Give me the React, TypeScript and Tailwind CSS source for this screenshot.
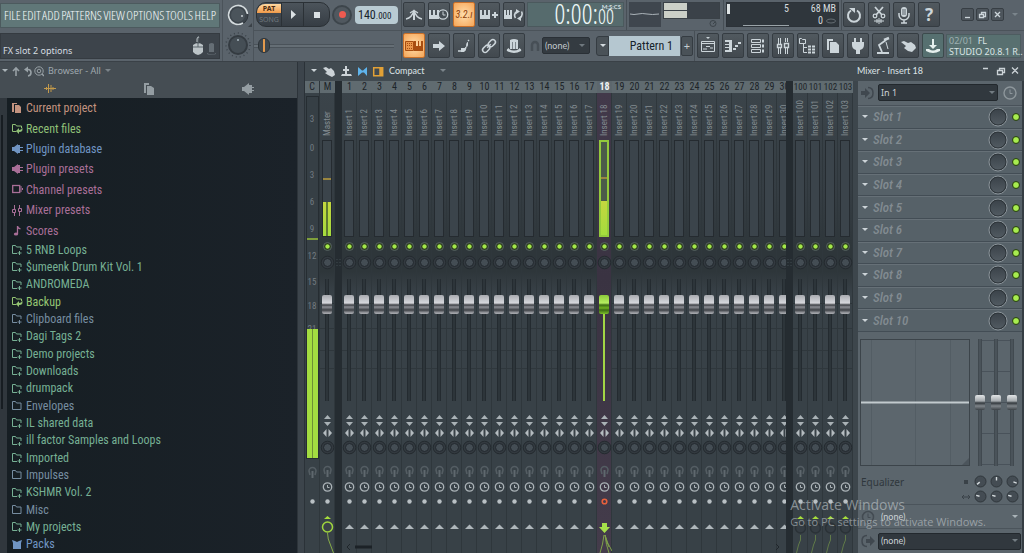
import React from "react";

const NARROW = "font-['Roboto_Condensed',Roboto,sans-serif]";
const SLIM = "font-['Open_Sans_Condensed_Light','Open_Sans_Condensed','Roboto_Condensed',sans-serif]";
const UI = "font-[Lato,'Noto_Sans',sans-serif]";
const WIDE = "font-['Noto_Sans','Open_Sans',sans-serif]";

function Svg({ w, h, children, className = "" }: { w: number; h: number; children: React.ReactNode; className?: string }) {
  return (
    <svg width={w} height={h} viewBox={`0 0 ${w} ${h}`} className={`block shrink-0 ${className}`} fill="none" stroke="none" aria-hidden="true">
      {children}
    </svg>
  );
}

const C = "#ccd5da";

const icons: Record<string, React.ReactNode> = {
  metronome: (
    <g stroke={C} fill="none">
      <path d="M2 14Q8 13 10 5Q12 13 18 14" strokeWidth="1.4" />
      <path d="M10 6v9" strokeWidth="2" />
      <path d="M6 8l3-2M14 8l-3-2" strokeWidth="1.200" />
    </g>
  ),
  waitKeys: (
    <g>
      <path d="M0 5h2v5h2V5h2v5h2V5h2v9H0z" fill={C} />
      <circle cx="14" cy="9.500" r="4.700" fill="#454d53" stroke={C} strokeWidth="1.300" />
      <path d="M14 6.500V10H16.500" stroke={C} />
    </g>
  ),
  stepKeys: <path d="M1 5h2v5h2V5h2v5h2V5h2v9H1zM13 9h2V7h2v2h2v2h-2v2h-2v-2h-2z" fill={C} />,
  loopKeys: (
    <g>
      <path d="M0 5h2v5h1V5h2v5h1V5h2v9H0z" fill={C} />
      <path d="M11.500 13q-2.500-4 1.500-6.500M17.500 6.500q2 4-2 7" stroke={C} strokeWidth="1.600" />
      <path d="M12 4l4 2.500-4 2.500zM17 16l-4-2.500 4-2.500z" fill={C} />
    </g>
  ),
  typing: (
    <g>
      <path d="M1.500 5.500h8v9h-8z" fill="#e8954a" stroke="#a84d10" />
      <path d="M3 7.500h6M3 9.500h6M3 12.500h6" stroke="#a84d10" strokeDasharray="1 1" />
      <path d="M10 5h2v5h2V5h1v5h2V5h2v10h-9z" fill="#a84d10" />
    </g>
  ),
  arrow: <path d="M4 8h6V5l6 5-6 5v-3H4z" fill={C} />,
  slide: (
    <g>
      <path d="M4 15h4q3 0 4-4" stroke={C} strokeWidth="1.500" />
      <path d="M7 12h4l1 2-2 2H7z" fill={C} />
      <path d="M12 11q0-5 2-5v3q0 2-2 2z" fill={C} />
      <path d="M14 5l1-1" stroke={C} strokeWidth="1.500" />
    </g>
  ),
  link: (
    <g stroke={C} strokeWidth="1.500" transform="rotate(-45 10 10)">
      <rect x="2" y="7.500" width="8" height="5" rx="2.500" />
      <rect x="10" y="7.500" width="8" height="5" rx="2.500" />
      <path d="M7.500 10h5" />
    </g>
  ),
  knob: (
    <g>
      <path d="M6 4q4-2 8 0v9H6z" fill={C} />
      <path d="M8.500 6v7M11.500 6v7" stroke="#7d868c" />
      <path d="M5 12q-3 1-2 3 7 4 14 0 1-2-2-3v1q-5 3-10 0z" fill={C} />
    </g>
  ),
  undo: (
    <g>
      <path d="M7 5.500a6 6 0 1 0 6 0" stroke={C} strokeWidth="2" />
      <path d="M5 3h6v5z" fill={C} />
    </g>
  ),
  cut: (
    <g stroke={C} strokeWidth="1.300">
      <path d="M6 2l7 8M14 2l-7 8" strokeWidth="1.800" />
      <circle cx="6" cy="11" r="1.800" />
      <circle cx="14" cy="11" r="1.800" />
      <path d="M5 16h10M8 14v4M10 13v6M12 14v4" strokeWidth="1" />
    </g>
  ),
  mic: (
    <g>
      <rect x="7" y="2" width="6" height="10" rx="3" fill={C} />
      <path d="M8 5h4M8 7h4M8 9h4" stroke="#59626a" />
      <path d="M5 8v2a5 5 0 0 0 10 0V8M10 15v3M7 18h6" stroke={C} strokeWidth="1.500" />
    </g>
  ),
  playlist: (
    <g>
      <path d="M8 1h4l-2 2z" fill={C} />
      <path d="M3.500 5.500h13v10h-13zM3.500 7.500h13" stroke={C} />
      <path d="M5 13h4M8 10.500h4M12 12h3" stroke={C} />
    </g>
  ),
  piano: (
    <g fill={C}>
      <path d="M2 4h7v12H2v-2h4v-2H2v-1h4V9H2V8h4V6H2z" />
      <path d="M10 12h3v2h-3zM12 9h3v2h-3zM15 6h3v2h-3z" />
    </g>
  ),
  rack: (
    <g stroke={C}>
      <path d="M3.500 3.500h9v3h-9zM3.500 8.500h9v3h-9zM3.500 13.500h9v3h-9z" />
      <path d="M14 5h2M14 10h2M14 15h2" strokeWidth="3" />
    </g>
  ),
  mixer: (
    <g stroke={C}>
      <path d="M5.500 2v6M7.500 2v6M5.500 12v6M7.500 12v6M12.500 2v4M14.500 2v4M12.500 11v7M14.500 11v7" />
      <path d="M4.500 8.500h4v3h-4zM11.500 7.500h4v4h-4z" strokeWidth="1.400" />
    </g>
  ),
  browser: (
    <g stroke={C}>
      <path d="M1.500 7.500v-5h2l1 1h3v4z" />
      <path d="M5.500 8v8.500H9M5.500 11.500H9" />
      <path d="M10 10.500h3M14 10.500h3M10 13.500h3M14 13.500h3M10 16.500h3M14 16.500h3" strokeWidth="2" />
    </g>
  ),
  copy: <path d="M4 3h6v2H6v9H4zM7 6h6l3 3v8H7z" fill={C} />,
  plug: <path d="M6 2h2v4h4V2h2v4h2v3q0 4-4 5v4H8v-4q-4-1-4-5V6h2z" fill={C} />,
  tempo: (
    <g stroke={C} fill="none">
      <path d="M13 4L6 9l3 7" strokeWidth="1.800" />
      <path d="M11 4l5-2" strokeWidth="2.500" />
      <path d="M13 6l2 7" />
      <path d="M4 17h12" strokeWidth="2" />
    </g>
  ),
  hand: <path d="M3 6l3-1 4 2 3-1 4 3 1 3-4 4-4-1-4-3 2-2z" fill={C} />,
  save: <path d="M9 3h2v6h3l-4 4-4-4h3zM3 13h3q4 3 8 0h3v2q-7 4-14 0z" fill="#e6f0ee" />,
};

function IconBtn({ icon, label, hot = false, teal = false }: { icon?: string; label: string; hot?: boolean; teal?: boolean }) {
  const tone = hot
    ? "border-[#c8702a] bg-[radial-gradient(#ffdfae,#f6a556)]"
    : teal
      ? "border-[#3c4a4c] bg-[#567070]"
      : "border-[#353c42] bg-linear-to-b from-[#51595f] to-[#42494f]";
  return (
    <button aria-label={label} className={`flex h-[25px] w-[22px] shrink-0 items-center justify-center rounded-[2px] border ${tone}`}>
      {icon ? (
        <Svg w={20} h={20}>{icons[icon]}</Svg>
      ) : (
        <span className={hot ? `text-[10px] whitespace-nowrap text-[#8c3e0a] italic ${NARROW}` : `text-[17px] font-bold text-[#ccd5da] ${WIDE}`}>{label}</span>
      )}
    </button>
  );
}

const Sep = () => <div className="h-full w-px shrink-0 bg-[#474f56]" />;

function Caret({ color = "#aab3b8" }: { color?: string }) {
  return (
    <Svg w={6} h={4}>
      <path d="M0 0h6L3 3z" fill={color} />
    </Svg>
  );
}

function Toolbar() {
  return (
    <header className="flex h-[62px] shrink-0 border-b border-[#3a4147] bg-[#5a636b]">
      <div className="flex w-[220px] shrink-0 flex-col">
        <nav className={`mt-[3px] flex h-[25px] items-center justify-between border border-[#4c5a5e] bg-[#607778] px-[3px] text-[13px] text-[#f4fafb] ${SLIM}`}>
          {["FILE", "EDIT", "ADD", "PATTERNS", "VIEW", "OPTIONS", "TOOLS", "HELP"].map((m) => (
            <button key={m}>{m}</button>
          ))}
        </nav>
        <div className="mt-[5px] flex h-[26px] items-end border border-[#353b41] bg-[#3d444b] pr-[2px] pl-[2px]">
          <span className={`flex-1 text-[9px] leading-[14px] text-[#d5dce0] ${WIDE}`}>FX slot 2 options</span>
          <Svg w={24} h={22}>
            <path d="M0 9q5-4 10 0v7q-5 6-10 0z" fill="#bcc4c8" />
            <path d="M5 8V4q2-3 0-4M0 11h10M5 7v4" stroke="#5d666c" />
            <path d="M4 6V3q0-2 2-2" stroke="#bcc4c8" />
            <path d="M16 8q3-2 5 0v8h-5z" fill="#656e75" />
            <path d="M14 17q5 3 9 0v1q-5 2-9 0z" fill="#656e75" />
          </Svg>
        </div>
      </div>
      <div className="ml-[2px] flex w-[32px] shrink-0 flex-col items-center border-x border-[#4b535a]">
        <Svg w={28} h={30}>
          <circle cx="14" cy="15" r="10" fill="#3c444b" stroke="#2f363c" strokeWidth="1" />
          <path d="M19 23A9.500 9.500 0 1 1 23.500 14" stroke="#d3dadd" strokeWidth="1.600" />
          <circle cx="14" cy="15" r="7" fill="#4b545b" />
          <circle cx="18" cy="16" r="1" fill="#c7ced2" />
          <path d="M24 27h4v-4z" fill="#3a4147" />
        </Svg>
        <Svg w={28} h={31}>
          <circle cx="14" cy="15" r="12" stroke="#3c444b" strokeWidth="1.500" strokeDasharray="1 3" />
          <circle cx="14" cy="15" r="10" fill="#343b41" />
          <circle cx="14" cy="15" r="8" fill="#454e55" />
          <circle cx="14" cy="10" r="1" fill="#a9b7bf" />
        </Svg>
      </div>
      <div className="flex min-w-0 flex-1 flex-col">
        <div className="flex h-[31px] items-center border-b border-[#4b535a]">
          <div className="flex h-full w-[147px] shrink-0 items-center pl-[2px]">
            <div className={`flex h-[25px] w-[74px] shrink-0 overflow-hidden rounded-[10px] border border-[#2b3136] bg-linear-to-b from-[#4c545b] to-[#363d44] ${WIDE}`}>
              <button className="flex w-[24px] shrink-0 flex-col text-center text-[7px] leading-[9px]">
                <span className="mt-px w-full rounded-tl-[8px] bg-linear-to-b from-[#ffd9a0] to-[#f09a48] font-bold text-[#4a2a10]">PAT</span>
                <span className="w-full pt-[2px] text-[#6f787e]">SONG</span>
              </button>
              <button aria-label="Play" className="flex w-[23px] shrink-0 items-center justify-center border-x border-[#2b3136]">
                <Svg w={6} h={9}><path d="M1 0v9l5-4.500z" fill="#dbe1e4" /></Svg>
              </button>
              <button aria-label="Stop" className="flex flex-1 items-center justify-center">
                <span className="size-[6px] bg-[#dbe1e4]" />
              </button>
            </div>
            <button aria-label="Record" className="ml-[2px] flex size-[20px] shrink-0 items-center justify-center rounded-full border-2 border-[#3d454b] bg-[#50585f]">
              <span className="size-[7px] rounded-full bg-[#ef5a50]" />
            </button>
            <div className={`ml-[3px] flex h-[18px] w-[43px] items-baseline rounded-[4px] bg-[#b9cbd3] pl-[3px] text-[#16232b] ${NARROW}`}>
              <span className="text-[12px] leading-[18px]">140</span>
              <span className="text-[9px]">.000</span>
            </div>
          </div>
          <Sep />
          <div className="ml-px flex gap-[3px]">
            <IconBtn icon="metronome" label="Metronome" />
            <IconBtn icon="waitKeys" label="Wait for input" />
            <IconBtn label="3.2.ı" hot />
            <IconBtn icon="stepKeys" label="Step edit" />
            <IconBtn icon="loopKeys" label="Loop record" />
          </div>
          <div className="relative ml-[2px] flex h-[25px] w-[97px] shrink-0 items-center justify-end border border-[#4b595d] bg-[#566b6d] pr-[9px]">
            <span className={`text-[27px] leading-[23px] text-[#eef8f8] ${SLIM}`}>0:00:<span className="text-[20px]">00</span></span>
            <span className={`absolute top-0 right-[2px] text-[6px] leading-[7px] font-bold text-[#d3dfe0] ${UI}`}>M:S:CS</span>
          </div>
          <div className="ml-[2px] h-full"><Sep /></div>
          <div className="ml-[2px] flex h-[25px] w-[32px] shrink-0 items-center bg-[#3f464e]">
            <Svg w={32} h={9}><path d="M1 4q4 1 8 0t9 0 12 0" stroke="#aab2b8" /></Svg>
          </div>
          <div className="ml-[2px] flex h-[25px] w-[57px] shrink-0 flex-col">
            <div className="flex h-[17px] shrink-0 flex-col gap-px border border-[#3a4147] bg-[#3b4249]">
              <span className="h-[7px] w-[23px] bg-[#ccd0c8]" />
              <span className="h-[7px] w-[23px] bg-[#ccd0c8]" />
            </div>
            <Svg w={57} h={8}><circle cx="50" cy="4.500" r="3" stroke="#3c444a" /><path d="M50 5l2-2" stroke="#3c444a" /></Svg>
          </div>
          <div className="ml-[3px] h-full"><Sep /></div>
          <div className={`ml-[2px] flex h-[25px] w-[113px] shrink-0 border border-[#2c3238] bg-[#2f363c] text-[10px] leading-[12px] text-[#d6dcdf] ${NARROW}`}>
            <div className="flex h-full w-[62px] justify-between bg-[linear-gradient(90deg,transparent_25%,#9aa3a8_25%)] bg-[length:100%_1px] bg-bottom bg-no-repeat">
              <span className="mt-px h-[10px] w-[3px] bg-[#dfe4e5]" />
              <span>5</span>
            </div>
            <div className="flex flex-1 flex-col items-end pr-[2px]">
              <span>68 MB</span>
              <span className="flex items-center gap-[3px]">0 <Svg w={10} h={6}><ellipse cx="5" cy="3" rx="4.500" ry="2" stroke="#656d73" /></Svg></span>
            </div>
          </div>
          <div className="ml-[2px] h-full"><Sep /></div>
          <div className="ml-px flex gap-[3px]">
            <IconBtn icon="undo" label="Undo" />
            <IconBtn icon="cut" label="Cut" />
            <IconBtn icon="mic" label="Record audio" />
            <IconBtn label="?" />
          </div>
          <div className="mr-[6px] ml-auto flex items-center gap-[2px]">
            {[
              ["Minimize", "M3 8.500h5"],
              ["Restore", "M2.500 5.500h4v3h-4zM4.500 5V3.500h4v4H7"],
              ["Close", "M3 3l5 5M8 3l-5 5"],
            ].map(([n, d]) => (
              <button key={n} aria-label={n} className="size-[13px] rounded-[2px] border border-[#373e44] bg-[#4d555c]">
                <Svg w={11} h={11}><path d={d} stroke={C} strokeWidth="1.300" /></Svg>
              </button>
            ))}
            <span className="ml-[6px]"><Caret color="#7b858c" /></span>
          </div>
        </div>
        <div className="flex h-[31px] items-center">
          <div className="flex h-full w-[147px] shrink-0 items-center">
            <input
              type="range"
              aria-label="Song position"
              defaultValue={0}
              className="h-[16px] w-[140px] appearance-none bg-transparent [&::-webkit-slider-runnable-track]:h-[4px] [&::-webkit-slider-runnable-track]:border-y [&::-webkit-slider-runnable-track]:border-[#4a5259] [&::-webkit-slider-runnable-track]:bg-[#656e75] [&::-webkit-slider-thumb]:-mt-[7px] [&::-webkit-slider-thumb]:ml-[4px] [&::-webkit-slider-thumb]:h-[15px] [&::-webkit-slider-thumb]:w-[12px] [&::-webkit-slider-thumb]:appearance-none [&::-webkit-slider-thumb]:rounded-[6px] [&::-webkit-slider-thumb]:border [&::-webkit-slider-thumb]:border-[#2d3439] [&::-webkit-slider-thumb]:bg-[linear-gradient(90deg,#3f474d_40%,#e39a4e_40%,#e39a4e_60%,#3f474d_60%)]"
            />
          </div>
          <Sep />
          <div className="ml-px flex gap-[3px]">
            <IconBtn icon="typing" label="Typing keyboard" hot />
            <IconBtn icon="arrow" label="Scroll" />
            <IconBtn icon="slide" label="Slide" />
            <IconBtn icon="link" label="Link" />
            <IconBtn icon="knob" label="Multilink" />
          </div>
          <Svg w={10} h={12} className="ml-[5px]"><path d="M2 11V5a3 3 0 0 1 6 0v6" stroke="#474f56" strokeWidth="2.500" /></Svg>
          <label className="ml-[2px] flex">
            <span className="sr-only">Snap</span>
            <select className={`h-[17px] w-[48px] appearance-none rounded-[2px] border border-[#2a3036] bg-[#343b41] pl-[2px] text-[9px] text-[#c2cace] ${UI}`}>
              <option>(none)</option>
            </select>
          </label>
          <div className="mr-[11px] -ml-[11px] h-[3px] w-[6px]"><Caret color="#6f787e" /></div>
          <button aria-label="Pattern menu" className="flex h-[20px] w-[13px] shrink-0 items-center justify-center rounded-l-[3px] border border-[#353c42] bg-[#4a5258]"><Caret color="#d4dbdf" /></button>
          <div className={`flex h-[20px] w-[71px] shrink-0 items-center justify-end bg-[#b5c7d0] pr-[7px] text-[12px] text-[#16232b] ${NARROW}`}>Pattern 1</div>
          <button className="ml-px flex h-[20px] w-[12px] shrink-0 items-center justify-center rounded-[2px] border border-[#353c42] bg-[#4a5258] text-[11px] text-[#c6ced2]">+</button>
          <div className="mx-px h-full"><Sep /></div>
          <div className="ml-px flex gap-[3px]">
            {["playlist", "piano", "rack", "mixer", "browser", "copy", "plug", "tempo", "hand"].map((n) => (
              <IconBtn key={n} icon={n} label={n} />
            ))}
            <IconBtn icon="save" label="save" teal />
          </div>
          <div className={`mr-[3px] ml-[2px] min-w-0 flex-1 border border-[#4d5c60] bg-[#587070] px-[2px] text-[9px] leading-[11px] text-[#dbe5e6] ${WIDE}`}>
            <div><span className="text-[#9fb0b2]">02/01</span>&nbsp; FL</div>
            <div className="whitespace-nowrap">STUDIO 20.8.1 R..</div>
          </div>
        </div>
      </div>
    </header>
  );
}

type Kind = "doc" | "recent" | "plug" | "channel" | "mixer" | "note" | "plus" | "folder" | "pack";

function ItemIcon({ kind, color }: { kind: Kind; color: string }) {
  const map: Record<Kind, React.ReactNode> = {
    doc: <path d="M0 1h5v1H2v8H0zM3 3h4l2 2v6H3z" fill={color} />,
    recent: (
      <g>
        <path d="M.5 9.500v-7h3l1 1.500h5v2M.5 9.500h4" stroke={color} />
        <path d="M4 9l3-3v2q3 0 3-3 2 5-3 5v2z" fill={color} />
      </g>
    ),
    plug: <path d="M0 4h2l4-3v10L2 8H0zM6 2h2v2h3v1H8v2h3v1H8v2H6z" fill={color} />,
    channel: (
      <g>
        <rect x=".7" y="2.500" width="7" height="7" stroke={color} strokeWidth="1.300" />
        <path d="M9 3v6M10.500 5v2" stroke={color} />
      </g>
    ),
    mixer: <path d="M2.500 1v4M2.500 8v4M7.500 1v3M7.500 7v5M.5 5.500h3v3h-3zM6.500 4.500h3v3h-3z" stroke={color} />,
    note: (
      <g>
        <path d="M5.500 10V2q0 2 3 3" stroke={color} strokeWidth="1.300" />
        <ellipse cx="4" cy="10" rx="2.200" ry="1.600" fill={color} />
      </g>
    ),
    plus: <path d="M.5 10.500v-8h3l1 1.500h4.500v3M.5 10.500h4.500M7.500 8v4M5.500 10h4" stroke={color} />,
    folder: <path d="M.5 10.500v-8h3l1 1.500h4.500v6.500z" stroke={color} />,
    pack: <path d="M0 2l3 1 2 1 2-1 3-1-1 3v6H1V5z" fill={color} />,
  };
  return <Svg w={12} h={13}>{map[kind]}</Svg>;
}

const G = "#76b094";
const B = "#768da0";
const P = "#a96f98";

const topItems: [Kind, string, string][] = [
  ["doc", "Current project", "#c3937f"],
  ["recent", "Recent files", "#8fc077"],
  ["plug", "Plugin database", "#7095c3"],
  ["plug", "Plugin presets", P],
  ["channel", "Channel presets", P],
  ["mixer", "Mixer presets", P],
  ["note", "Scores", P],
];

const folders: [Kind, string, string][] = [
  ["plus", "5 RNB Loops", G],
  ["plus", "$umeenk Drum Kit Vol. 1", G],
  ["plus", "ANDROMEDA", G],
  ["recent", "Backup", "#95c573"],
  ["plus", "Clipboard files", B],
  ["plus", "Dagi Tags 2", G],
  ["plus", "Demo projects", G],
  ["plus", "Downloads", G],
  ["plus", "drumpack", G],
  ["folder", "Envelopes", B],
  ["plus", "IL shared data", G],
  ["plus", "ill factor Samples and Loops", G],
  ["plus", "Imported", G],
  ["folder", "Impulses", B],
  ["plus", "KSHMR Vol. 2", G],
  ["folder", "Misc", B],
  ["plus", "My projects", G],
  ["pack", "Packs", "#7095c3"],
];

function Row({ item }: { item: [Kind, string, string] }) {
  return (
    <li className="flex-1">
      <button className="flex h-full w-full items-center gap-[2px] text-left" style={{ color: item[2] }}>
        <ItemIcon kind={item[0]} color={item[2]} />
        <span className="leading-[16px]">{item[1]}</span>
      </button>
    </li>
  );
}

function Browser() {
  return (
    <aside className="flex w-[298px] shrink-0 flex-col border-r border-[#2d343a]">
      <div className="h-[36px] shrink-0 bg-[#454d53] pt-[2px]">
        <div className={`flex h-[14px] items-center gap-[4px] pl-[2px] text-[9px] text-[#9fa8ae] ${WIDE}`}>
          <Caret />
          <Svg w={33} h={11} className="-ml-px">
            <path d="M5 10V2M2 5l3-3 3 3" stroke="#98a1a6" strokeWidth="1.600" />
            <path d="M15 3.500h2q3 0 3 3t-3 3.500" stroke="#98a1a6" strokeWidth="1.600" />
            <path d="M13 3.500l4-3v6z" fill="#98a1a6" />
            <circle cx="28" cy="5" r="4.200" stroke="#98a1a6" />
            <circle cx="28" cy="5" r="1.800" stroke="#98a1a6" />
            <path d="M31 8l2 2" stroke="#98a1a6" strokeWidth="1.500" />
          </Svg>
          <span>Browser - All</span>
          <Caret color="#7b848a" />
        </div>
        <div className="mt-px flex h-[19px] items-center justify-around">
          <button aria-label="Sounds"><Svg w={12} h={11}><path d="M0 5.500h12M2.500 4v3M4.500 1v9M7 2v7M9 4v3" stroke="#c39a4b" /></Svg></button>
          <button aria-label="Files"><Svg w={12} h={12}><path d="M1 0h5v2H3v8H1zM4 3h4l3 2v7H4z" fill="#949da2" /></Svg></button>
          <button aria-label="Plugins"><Svg w={12} h={12}><path d="M0 4h2l5-4v12L2 8H0zM7 2h3v2h2v1h-2v2h2v1h-2v2H7z" fill="#949da2" /></Svg></button>
        </div>
      </div>
      <div className="flex min-h-0 flex-1 bg-[#30373d]">
        <div className="w-[7px] shrink-0 pt-[17px]">
          <div className="ml-px h-[294px] w-[2px] bg-[#171d22]" />
        </div>
        <div className={`flex flex-1 flex-col bg-linear-to-r from-[#161e23] to-[#1b2229] pl-[5px] text-[12px] ${NARROW}`}>
          <ul className="flex h-[143px] shrink-0 flex-col">
            {topItems.map((i) => <Row key={i[1]} item={i} />)}
          </ul>
          <ul className="flex flex-1 flex-col">
            {folders.map((i) => <Row key={i[1]} item={i} />)}
          </ul>
        </div>
      </div>
    </aside>
  );
}

type Strip = { id: string; name: string; selected?: boolean; level?: boolean; output: "send" | "master" | "bus" | "active" };

function OutputIcon({ output }: { output: Strip["output"] }) {
  if (output === "master")
    return (
      <Svg w={15} h={44}>
        <path d="M4 10l3.500-3 3.500 3z" fill="#a6dd3c" />
        <circle cx="7.500" cy="18" r="5" fill="#3b4248" stroke="#a0d63e" strokeWidth="1.500" />
        <path d="M7.500 24q0 6 3 12l3 8" stroke="#86ab48" />
      </Svg>
    );
  if (output === "bus")
    return (
      <Svg w={15} h={44}>
        <path d="M4 10l3.500-3 3.500 3z" fill="#a6dd3c" />
        <circle cx="7.500" cy="19" r="5" fill="#353d43" stroke="#2b3237" strokeWidth="1.500" />
        <path d="M7.500 26q1 5-2 10l-2 8" stroke="#607a48" />
      </Svg>
    );
  if (output === "active")
    return (
      <Svg w={15} h={44}>
        <path d="M5 14h5v4h3l-5.500 6L2 18h3z" fill="#a6e04a" />
        <path d="M7 26q-1 9-4 18M8 26q1 10 4 18M8 26q2 8 7 16M8 26q1 6 4 12" stroke="#7fa24a" />
      </Svg>
    );
  return (
    <Svg w={15} h={44}>
      <path d="M3 20l4.500-4.500 4.500 4.500z" fill="#aeb6ba" />
    </Svg>
  );
}

function RouteIcon() {
  return (
    <>
      <path d="M5 19l-1-4a3.500 3.500 0 0 1 7 0l-1 4" stroke="#545d63" strokeWidth="1.600" />
      <path d="M6.500 15h2v7h-2z" fill="#5f686e" />
    </>
  );
}

function Knob() {
  return (
    <Svg w={15} h={15}>
      <circle cx="7.500" cy="7.500" r="6.300" fill="#333a40" stroke="#242a2f" />
      <circle cx="7.500" cy="7.500" r="4" fill="#444d54" stroke="#22282d" />
    </Svg>
  );
}

function Channel({ s }: { s: Strip }) {
  const tint = s.selected
    ? "bg-linear-to-b from-[#42394a] via-[#3a3342] via-[40%] to-[#443c4b]"
    : "bg-[linear-gradient(180deg,#3b444a_0px,#353d43_100px,#2e363a_155px,#2e363a_178px,#384147_200px,#384147_210px,#2d353a_210px,#2d353a_211px,#384147_211px,#384147_235px,#2f373c_235px,#2f373c_236px,#384147_236px,#384147_257px,#2f373c_257px,#2f373c_258px,#384147_258px,#384147_275px,#2f373c_275px,#2f373c_276px,#384147_276px)]";
  return (
    <div className="flex w-[15px] shrink-0 flex-col items-center">
      <div className={`flex h-[12px] w-full justify-center leading-[12px] whitespace-nowrap ${s.id.length > 2 ? "text-[9px]" : "text-[10px]"} ${s.selected ? "bg-[#5d676d] font-bold text-[#eef2f4]" : "bg-[#606b70] text-[#1d2429]"}`}>{s.id}</div>
      <div className={`flex w-full flex-1 flex-col items-center border-r border-[#2f373c] ${tint}`}>
        <div className="flex h-[47px] w-full shrink-0 items-center justify-center pb-[4px]">
          <span className="h-full rotate-180 text-[9px] leading-[12px] whitespace-nowrap text-[#838c91] [writing-mode:vertical-rl]">{s.name}</span>
        </div>
        <div className={`flex h-[97px] w-[10px] shrink-0 flex-col justify-end ${s.selected ? "border-2 border-[#93c93c] bg-[#4b5b49]" : "border border-[#252b30] bg-[#3b444b]"}`}>
          {s.level && (
            <>
              <div className="mb-[22px] h-[2px] w-full shrink-0 bg-[#9a8640]" />
              <div className="h-[34px] w-full shrink-0 bg-[linear-gradient(90deg,transparent_43%,#5f7a30_43%,#5f7a30_57%,transparent_57%),linear-gradient(#c5d63f,#a4dc3d)]" />
            </>
          )}
        </div>
        <label className="flex h-[18px] w-full shrink-0 items-center justify-center">
          <input type="checkbox" defaultChecked aria-label={`${s.name} on`} className="size-[9px] appearance-none rounded-full border border-[#566361] bg-[#2b3232] checked:bg-[radial-gradient(#a4e84a_35%,#2f401f_50%)]" />
        </label>
        <div className="h-[24px] shrink-0"><Knob /></div>
        <input
          type="range"
          defaultValue={84}
          aria-label={`${s.name} level`}
          className={`h-[122px] w-[12px] shrink-0 appearance-none bg-transparent [direction:rtl] [writing-mode:vertical-lr] [&::-webkit-slider-runnable-track]:w-[12px] ${s.selected ? "[&::-webkit-slider-runnable-track]:bg-[linear-gradient(#a2d645,#a2d645)] [&::-webkit-slider-runnable-track]:bg-[length:2px_90px] [&::-webkit-slider-runnable-track]:bg-bottom [&::-webkit-slider-runnable-track]:bg-no-repeat" : "[&::-webkit-slider-runnable-track]:bg-[linear-gradient(90deg,transparent_4px,#242b30_4px,#242b30_5px,#2d353a_5px,#2d353a_7px,#242b30_7px,#242b30_8px,transparent_8px)]"} [&::-webkit-slider-thumb]:ml-px [&::-webkit-slider-thumb]:h-[19px] [&::-webkit-slider-thumb]:w-[10px] [&::-webkit-slider-thumb]:appearance-none [&::-webkit-slider-thumb]:rounded-[2px] ${s.selected ? "[&::-webkit-slider-thumb]:bg-[linear-gradient(#8cc83a_0,#b6ee60_8px,#3c6a14_10px,#6fb020_13px,#3c6a14_15px,#7cc02a_19px)]" : "[&::-webkit-slider-thumb]:bg-[linear-gradient(#a9abb0_0,#d6d7dc_8px,#3d4045_10px,#8b8d93_12px,#3d4045_15px,#a2a4a9_18px)]"}`}
        />
        <Svg w={15} h={42} className="mt-[12px]">
          <path d="M4 6l3.500-4L11 6zM4 9h7l-3.500 4z" fill="#aab2b6" />
          <path d="M6.500 16v8L3 20zM8.500 16v8l3.500-4z" fill="#b5bcc0" />
          <circle cx="7.500" cy="34.500" r="6.300" fill="#333a40" stroke="#242a2f" />
          <circle cx="7.500" cy="34.500" r="4" fill="#444d54" stroke="#22282d" />
        </Svg>
        <Svg w={15} h={54}>
          <RouteIcon />
          <circle cx="7.500" cy="32" r="4.200" stroke="#aab2b6" strokeWidth="1.300" />
          <path d="M7.500 30v2.500H9.500" stroke="#aab2b6" />
          {s.selected ? <circle cx="7.500" cy="46.500" r="2.300" stroke="#e8603c" strokeWidth="1.600" /> : <circle cx="7.500" cy="46.500" r="2.200" fill="#b9c0c4" />}
        </Svg>
        <OutputIcon output={s.output} />
      </div>
    </div>
  );
}

const inserts: Strip[] = Array.from({ length: 30 }, (_, i) => ({
  id: String(i + 1),
  name: `Insert ${i + 1}`,
  selected: i === 17,
  level: i === 17,
  output: i === 17 ? "active" : "send",
}));
const docked: Strip[] = [100, 101, 102, 103].map((n) => ({ id: String(n), name: `Insert ${n}`, output: "bus" }));

const scale: [string, number][] = [["3", 29], ["0", 27], ["3", 27], ["6", 27], ["9", 27], ["12", 26], ["15", 24], ["18", 23], ["21", 22]];

function MasterMeter() {
  return (
    <div className="flex w-[15px] shrink-0 flex-col items-center border-r border-[#2f373c]">
      <div className="h-[12px] w-full bg-[#606b70] text-center text-[10px] leading-[12px] text-[#1d2429]">C</div>
      <div className="relative mt-[3px] flex h-[363px] w-[13px] shrink-0 flex-col border border-[#262d32] bg-[#363f45] pt-[15px] text-center text-[9px] leading-[14px] text-[#727b81]">
        {scale.map(([n, h], i) => (
          <span key={i} className="shrink-0" style={{ height: h }}>{n}</span>
        ))}
        <div className="absolute top-[141px] right-0 left-0 h-[2px] bg-[#7f9f3c]" />
        <div className="absolute right-0 bottom-0 left-0 h-[129px] bg-[linear-gradient(90deg,#a3dc41_45%,#6d8f35_45%,#6d8f35_55%,#a3dc41_55%)]" />
      </div>
      <Svg w={15} h={54}>
        <g transform="translate(0 -3)"><RouteIcon /></g>
        <circle cx="7.500" cy="42.500" r="2.200" fill="#b9c0c4" />
      </Svg>
    </div>
  );
}

function Divider() {
  return (
    <div className="flex w-[7px] shrink-0 flex-col items-center bg-[#252c31] pt-[178px]">
      <Svg w={5} h={8}><path d="M1 0v8M4 0v8" stroke="#414a50" strokeDasharray="1 2" /></Svg>
    </div>
  );
}

function Caption() {
  return (
    <div className={`flex h-[19px] shrink-0 items-center bg-[#414a50] pr-[5px] pb-px pl-[6px] text-[9px] text-[#dde3e6] ${UI}`}>
      <Caret color="#ccd3d7" />
      <Svg w={62} h={13} className="ml-[6px]">
        <path d="M0 3l3-1 3 2 2-1 3 3 1 4-3 2-4-2-3-2 2-1z" fill="#ccd3d7" />
        <path d="M22 1h2v3h2v2h-2v3h4l1 2H18l1-2h3V6h-2V4h2z" fill="#ccd3d7" />
        <path d="M35 2v9l4-3.500h2l3 3.500V2l-4 3.500h-1z" fill="#5fb4ec" />
        <path d="M50.700 2.700h9v8h-9zM57 3v8M58.500 3v8" stroke="#e2a136" strokeWidth="1.500" />
      </Svg>
      <span className="ml-[4px]">Compact</span>
      <span className="ml-[16px]"><Caret color="#7b848a" /></span>
      <h1 className="ml-auto w-[124px]">Mixer - Insert 18</h1>
      <Svg w={38} h={10}>
        <path d="M2 2.500h5M16.500 4.500h5v4h-5zM18.500 4V2.500h5v4H22M31 1.500l6 6M37 1.500l-6 6" stroke="#ccd3d7" strokeWidth="1.300" />
      </Svg>
    </div>
  );
}

function BigKnob() {
  return (
    <Svg w={20} h={20}>
      <defs>
        <linearGradient id="knobFace" x1="0" y1="0" x2="0" y2="1">
          <stop offset="0" stopColor="#3b434a" />
          <stop offset="1" stopColor="#515a61" />
        </linearGradient>
      </defs>
      <circle cx="10" cy="10" r="9" fill="#2d3439" stroke="#8b949a" />
      <circle cx="10" cy="10" r="7.500" fill="url(#knobFace)" />
    </Svg>
  );
}

function EqKnob({ angle }: { angle: number }) {
  return (
    <Svg w={13} h={13}>
      <circle cx="6.500" cy="6.500" r="5.500" fill="#444c53" stroke="#30373c" />
      <path d="M6.500 5.500V2" stroke="#d5dbde" strokeWidth="1.400" transform={`rotate(${angle} 6.500 6.500)`} />
    </Svg>
  );
}

function Effects() {
  return (
    <section className="flex w-[164px] shrink-0 flex-col bg-[#5b656c]">
      <div className="flex h-[25px] shrink-0 items-center border-b border-[#49525a] pb-px pl-[3px]">
        <Svg w={14} h={14}>
          <path d="M0 5h4V2l5 5-5 5V9H0z" fill="#40484f" />
          <path d="M7 1.500q5 0 5 5.500t-5 5.500" stroke="#40484f" strokeWidth="1.500" />
        </Svg>
        <label className="ml-[3px] flex items-center">
          <span className="sr-only">Input</span>
          <select className={`h-[17px] w-[120px] appearance-none rounded-[2px] border border-[#22282d] bg-[#31383e] pl-[2px] text-[9px] text-[#ccd3d7] ${WIDE}`}>
            <option>In 1</option>
          </select>
        </label>
        <div className="mr-[9px] -ml-[9px] w-0"><Caret color="#737c82" /></div>
        <Svg w={14} h={14} className="ml-[5px]">
          <circle cx="7" cy="7" r="6" stroke="#8d969b" strokeWidth="1.400" />
          <path d="M7 3.500V7.500H9.500" stroke="#8d969b" />
        </Svg>
      </div>
      <ul className="flex h-[226px] shrink-0 flex-col bg-[#566168]">
        {Array.from({ length: 10 }, (_, i) => (
          <li key={i} className="flex flex-1 items-center border-t border-b border-t-[#667077] border-b-[#434d55] pr-[2px] pl-[4px]">
            <button className="flex flex-1 items-center gap-[5px]">
              <Caret color="#ccd3d7" />
              <span className={`text-[13px] leading-[16px] font-medium text-[#828b91] italic ${NARROW}`}>Slot {i + 1}</span>
            </button>
            <BigKnob />
            <input type="checkbox" defaultChecked aria-label={`Slot ${i + 1} on`} className="ml-[4px] size-[8px] appearance-none rounded-full border border-[#2e4a12] bg-[#444] checked:bg-[radial-gradient(#a8ec50_50%,#6fae2a)]" />
          </li>
        ))}
      </ul>
      <div className="flex h-[135px] shrink-0 pt-[7px] pr-[2px] pl-[2px]">
        <div className="h-[127px] w-[110px] shrink-0 border border-[#3c444a] bg-[#5c666d]">
          <Svg w={108} h={125}>
            <path d="M10.500 0v125M54.500 0v125M89.500 0v125" stroke="#535d64" />
            <path d="M0 62.500h108" stroke="#c2cace" strokeWidth="2" />
            <path d="M108 118v7h-7z" fill="#4c555c" />
          </Svg>
        </div>
        <div className="ml-[2px] flex flex-1 justify-around bg-[repeating-linear-gradient(180deg,#49525a_0px,#49525a_1px,transparent_1px,transparent_31px)] bg-[length:34px_127px] bg-center bg-no-repeat">
          {["Low", "Mid", "High"].map((b) => (
            <input
              key={b}
              type="range"
              defaultValue={50}
              aria-label={`${b} band`}
              className="h-[127px] w-[12px] appearance-none bg-transparent [writing-mode:vertical-lr] [&::-webkit-slider-runnable-track]:w-[12px] [&::-webkit-slider-runnable-track]:bg-[linear-gradient(90deg,transparent_4px,#3c444a_4px,#4f585f_6px,#3c444a_8px,transparent_8px)] [&::-webkit-slider-thumb]:ml-px [&::-webkit-slider-thumb]:h-[15px] [&::-webkit-slider-thumb]:w-[10px] [&::-webkit-slider-thumb]:appearance-none [&::-webkit-slider-thumb]:rounded-[2px] [&::-webkit-slider-thumb]:bg-[linear-gradient(#e2e5e7_0,#a5aaae_6px,#33393e_8px,#7f858a_11px,#3c4247_15px)]"
            />
          ))}
        </div>
      </div>
      <div className={`flex h-[38px] shrink-0 justify-between border-b border-[#4b545b] pt-[8px] pr-[3px] pl-[3px] text-[10px] leading-[14px] text-[#2f373c] ${WIDE}`}>
        <span>Equalizer</span>
        <div className="flex flex-col gap-[2px]">
          <div className="flex items-center gap-[3px]"><Svg w={10} h={6}><path d="M3 1v4h4V1z" fill="#3a4248" /></Svg><EqKnob angle={230} /><EqKnob angle={0} /><EqKnob angle={110} /></div>
          <div className="flex items-center gap-[3px]"><Svg w={10} h={6}><path d="M1 3h8M3 1L1 3l2 2M7 1l2 2-2 2" stroke="#3a4248" /></Svg><EqKnob angle={285} /><EqKnob angle={285} /><EqKnob angle={285} /></div>
        </div>
      </div>
      <div className="flex h-[24px] shrink-0 items-center border-b border-[#4b545b] pl-[3px]">
        <Svg w={14} h={14}><circle cx="7" cy="7" r="5.500" stroke="#434b52" strokeWidth="1.500" /><path d="M7 3.500V7.500H9.500" stroke="#434b52" /></Svg>
        <label className="ml-[3px] flex flex-1"><span className="sr-only">Delay</span>
          <select className={`w-full appearance-none bg-transparent pl-[3px] text-[9px] text-[#ccd3d7] ${UI}`}><option>(none)</option></select>
        </label>
        <span className="mr-[4px]"><Caret /></span>
      </div>
      <div className="flex h-[24px] shrink-0 items-center pr-px pl-[3px]">
        <Svg w={14} h={14}>
          <path d="M6 1.500q-5 0-5 5.500t5 5.500" stroke="#40484f" strokeWidth="1.500" />
          <path d="M5 5h4V2l5 5-5 5V9H5z" fill="#40484f" />
        </Svg>
        <label className="ml-[3px] flex flex-1"><span className="sr-only">Output</span>
          <select className={`h-[17px] w-full appearance-none rounded-[2px] border border-[#22282d] bg-[#31383e] pl-[2px] text-[9px] text-[#ccd3d7] ${UI}`}><option>(none)</option></select>
        </label>
        <div className="mr-[9px] -ml-[9px] w-0"><Caret color="#737c82" /></div>
      </div>
    </section>
  );
}

function Mixer() {
  return (
    <main className="flex min-w-0 flex-1 flex-col border-l border-[#2b3238] bg-[#384147]">
      <Caption />
      <div className={`flex min-h-0 flex-1 ${NARROW}`}>
        <MasterMeter />
        <Channel s={{ id: "M", name: "Master", level: true, output: "master" }} />
        <Divider />
        <div className="relative flex min-w-0 flex-1 overflow-hidden">
          {inserts.map((s) => <Channel key={s.id} s={s} />)}
          <Svg w={30} h={8} className="absolute bottom-[2px] left-[4px]"><path d="M4 1L1 4l3 3" stroke="#20262b" /><path d="M9 4h17" stroke="#1c2227" strokeWidth="3" /></Svg>
          <Svg w={5} h={8} className="absolute right-[6px] bottom-[2px]"><path d="M1 1l3 3-3 3" stroke="#20262b" /></Svg>
        </div>
        <Divider />
        {docked.map((s) => <Channel key={s.id} s={s} />)}
        <div className="w-[5px] shrink-0 bg-[#3d464c]" />
        <Effects />
        <div className="w-[2px] shrink-0 bg-[#353d43]" />
      </div>
    </main>
  );
}

export default function App() {
  return (
    <div className="relative flex h-screen flex-col overflow-hidden bg-[#3c444b]">
      <Toolbar />
      <div className="flex min-h-0 flex-1 gap-[6px]">
        <Browser />
        <Mixer />
      </div>
      <div className="pointer-events-none absolute right-[38px] bottom-[24px] font-['Open_Sans',sans-serif] text-[#c3cacd]/60">
        <p className="text-[14px] leading-[20px]">Activate Windows</p>
        <p className="text-[11px] leading-[14px]">Go to PC settings to activate Windows.</p>
      </div>
    </div>
  );
}
